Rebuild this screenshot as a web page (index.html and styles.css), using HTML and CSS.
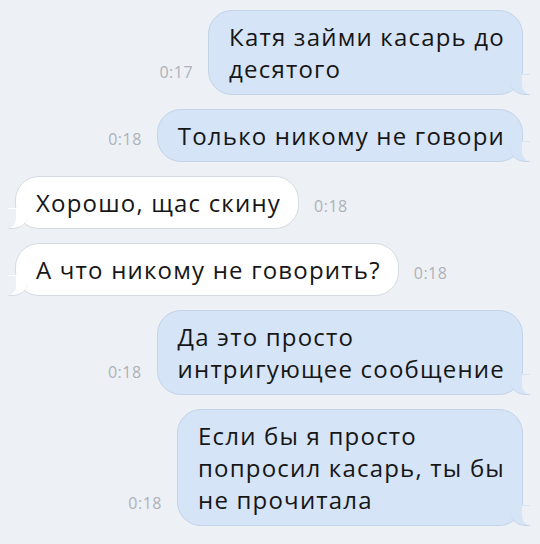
FILE: index.html
```html
<!DOCTYPE html>
<html lang="ru">
<head>
    <meta charset="UTF-8">
    <meta name="viewport" content="width=device-width, initial-scale=1.0">
    <title>Чат</title>
    <link rel="stylesheet" href="styles.css">
</head>
<body>
    <div class="chat">
        <div class="row out">
            <span class="time">0:17</span>
            <div class="bubble">Катя займи касарь до<br>десятого</div>
        </div>
        <div class="row out">
            <span class="time">0:18</span>
            <div class="bubble">Только никому не говори</div>
        </div>
        <div class="row in">
            <div class="bubble">Хорошо, щас скину</div>
            <span class="time">0:18</span>
        </div>
        <div class="row in">
            <div class="bubble">А что никому не говорить?</div>
            <span class="time">0:18</span>
        </div>
        <div class="row out">
            <span class="time">0:18</span>
            <div class="bubble">Да это просто<br>интригующее сообщение</div>
        </div>
        <div class="row out">
            <span class="time">0:18</span>
            <div class="bubble">Если бы я просто<br>попросил касарь, ты бы<br>не прочитала</div>
        </div>
    </div>
</body>
</html>
```

FILE: styles.css
```css
body { margin: 0; background: #edf0f5; font-family: "Open Sans", "Liberation Sans", sans-serif; }
.chat { display: flex; flex-direction: column; gap: 14px; padding: 10px 17px 0 15px; }
.row { display: flex; align-items: flex-end; gap: 15px; }
.row.out { justify-content: flex-end; }
.row.in { justify-content: flex-start; }
.time { font-size: 16px; line-height: 18px; letter-spacing: 0.5px; color: #adb2b9; margin-bottom: 14px; }
.bubble { position: relative; white-space: nowrap; font-size: 24px; line-height: 32px; letter-spacing: 1.2px; color: #161616; padding: 10px 17px 9px 20px; border-radius: 24px; }
.out .bubble { background: #d5e4f7; border: 1px solid #c3d3e8; }
.in .bubble { background: #fff; border: 1px solid #d6dbe3; }

/* tails */
.bubble::before, .bubble::after { content: ""; position: absolute; bottom: -1px; height: 20px; }
.out .bubble::before { right: -8px; width: 20px; background: #d5e4f7; border-bottom-left-radius: 16px 14px; border-bottom: 1px solid #c3d3e8; }
.out .bubble::after { right: -10px; width: 10px; background: #edf0f5; border-bottom-left-radius: 10px; }
.in .bubble::before { left: -8px; width: 20px; background: #fff; border-bottom-right-radius: 16px 14px; border-bottom: 1px solid #d6dbe3; }
.in .bubble::after { left: -10px; width: 10px; background: #edf0f5; border-bottom-right-radius: 10px; }
```
